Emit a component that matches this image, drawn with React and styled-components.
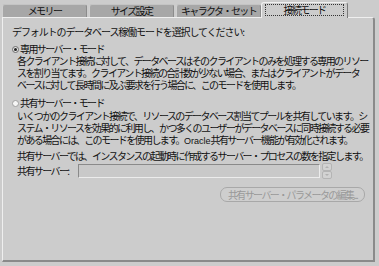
import React from "react";
import styled, { createGlobalStyle } from "styled-components";

const Global = createGlobalStyle`
  html, body { margin: 0; padding: 0; background: #cccccc; }
  body { font-family: "Noto Sans CJK JP", "Noto Sans", sans-serif; color: #111111; }
`;

const Frame = styled.div`
  width: 379px;
  height: 266px;
  box-sizing: border-box;
  padding: 2px 4px 4px 2px;
  display: flex;
  flex-direction: column;
  background: #cccccc;
`;

const TabRow = styled.div`
  display: flex;
  align-items: flex-end;
  gap: 2px;
  height: 15px;
  position: relative;
  z-index: 1;
`;

const Tab = styled.div`
  box-sizing: border-box;
  width: ${p => (p.$active ? 87 : 85)}px;
  height: ${p => (p.$active ? 16 : 13)}px;
  margin-left: ${p => (p.$active ? -2 : 0)}px;
  margin-bottom: ${p => (p.$active ? -1 : 0)}px;
  background: ${p => (p.$active ? "#cccccc" : "#a7a7a7")};
  border-top: 1px solid ${p => (p.$active ? "#f0f0f0" : "#c4c4c4")};
  border-left: 1px solid ${p => (p.$active ? "#f0f0f0" : "#d0d0d0")};
  border-right: 1px solid ${p => (p.$active ? "#7a7a7a" : "#8c8c8c")};
  border-radius: 3px 3px 0 0;
  display: flex;
  align-items: flex-start;
  justify-content: center;
  padding: ${p => (p.$active ? "1px 3px 1px 3px" : "0")};
  font-size: 10px;
  letter-spacing: -1.6px;
  line-height: 11px;
  white-space: nowrap;
`;

const Focus = styled.div`
  flex: 1;
  height: 12px;
  border: 1px dotted #333;
  box-sizing: border-box;
  display: flex;
  justify-content: center;
  line-height: 10px;
`;

const Panel = styled.div`
  flex: 1;
  box-sizing: border-box;
  background: #cccccc;
  border-top: 1px solid #efefef;
  border-left: 1px solid #efefef;
  border-right: 2px solid #8a8a8a;
  border-bottom: 2px solid #8a8a8a;
  border-top-right-radius: 3px;
  padding: 8px 8px 0 9px;
  font-size: 10px;
  letter-spacing: -1.6px;
  line-height: 12px;
`;

const Line = styled.div`
  white-space: nowrap;
  height: 12px;
  padding-left: ${p => p.$indent || 0}px;
  margin-top: ${p => p.$mt || 0}px;
  letter-spacing: ${p => p.$spacing || "inherit"};
`;

const Latin = styled.span`
  letter-spacing: 0;
  font-family: "Liberation Sans", "Noto Sans", sans-serif;
  font-size: 9px;
`;

const RadioRow = styled.div`
  display: flex;
  align-items: center;
  gap: 1px;
  height: 12px;
  margin-top: ${p => p.$mt}px;
  white-space: nowrap;
`;

const RadioCircle = styled.span`
  box-sizing: border-box;
  width: 7px;
  height: 7px;
  border-radius: 50%;
  border: 1px solid ${p => (p.$on ? "#6e6e6e" : "#a0a0a0")};
  background: ${p => (p.$on ? "#e4e4e4" : "#f6f6f6")};
  display: flex;
  align-items: center;
  justify-content: center;
  &::after {
    content: "";
    display: ${p => (p.$on ? "block" : "none")};
    width: 3px;
    height: 3px;
    border-radius: 50%;
    background: #222;
  }
`;

const Desc = styled.div`
  padding-left: 5px;
  margin-top: ${p => p.$mt || 0}px;
`;

const FieldRow = styled.div`
  display: flex;
  align-items: center;
  height: 16px;
  margin-top: 1px;
  padding-left: 5px;
  white-space: nowrap;
`;

const Label = styled.span`
  width: 61px;
`;

const Input = styled.div`
  box-sizing: border-box;
  width: 242px;
  height: 14px;
  background: #c9c9c9;
  border-top: 1px solid #8a8a8a;
  border-left: 1px solid #8a8a8a;
  border-bottom: 1px solid #ececec;
  border-right: 1px solid #ececec;
`;

const Spinner = styled.div`
  display: flex;
  flex-direction: column;
  margin-left: 2px;
`;

const SpinBtn = styled.div`
  box-sizing: border-box;
  width: 10px;
  height: 8px;
  border: 1px solid #b4b4b4;
  border-radius: 2px;
  background: #d2d2d2;
  display: flex;
  align-items: center;
  justify-content: center;
  &::after {
    content: "";
    width: 0;
    height: 0;
    border-left: 2px solid transparent;
    border-right: 2px solid transparent;
    ${p => (p.$up ? "border-bottom: 2px solid #b0b0b0;" : "border-top: 2px solid #b0b0b0;")}
  }
`;

const ButtonRow = styled.div`
  display: flex;
  justify-content: flex-end;
  margin-top: 8px;
`;

const Button = styled.div`
  box-sizing: border-box;
  width: 145px;
  height: 15px;
  border: 1px solid #a8a8a8;
  border-radius: 7px;
  background: #cecece;
  color: #999999;
  display: flex;
  align-items: center;
  justify-content: center;
  line-height: 12px;
  white-space: nowrap;
`;

const tabs = ["メモリー", "サイズ設定", "キャラクタ・セット", "接続モード"];

export default function App() {
  return (
    <>
      <Global />
      <Frame>
        <TabRow>
          {tabs.map((t, i) =>
            i === 3 ? (
              <Tab key={t} $active>
                <Focus>{t}</Focus>
              </Tab>
            ) : (
              <Tab key={t}>{t}</Tab>
            )
          )}
        </TabRow>
        <Panel>
          <Line $spacing="-1.1px">デフォルトのデータベース稼働モードを選択してください:</Line>
          <RadioRow $mt={5}>
            <RadioCircle $on />
            <span>専用サーバー・モード</span>
          </RadioRow>
          <Desc>
            <Line>各クライアント接続に対して、データベースはそのクライアントのみを処理する専用のリソー</Line>
            <Line>スを割り当てます。クライアント接続の合計数が少ない場合、またはクライアントがデータ</Line>
            <Line>ベースに対して長時間に及ぶ要求を行う場合に、このモードを使用します。</Line>
          </Desc>
          <RadioRow $mt={6}>
            <RadioCircle />
            <span>共有サーバー・モード</span>
          </RadioRow>
          <Desc $mt={1}>
            <Line>いくつかのクライアント接続で、リソースのデータベース割当てプールを共有しています。シ</Line>
            <Line>ステム・リソースを効果的に利用し、かつ多くのユーザーがデータベースに同時接続する必要</Line>
            <Line>がある場合には、このモードを使用します。<Latin>Oracle</Latin>共有サーバー機能が有効化されます。</Line>
          </Desc>
          <Line $indent={5} $mt={4}>共有サーバーでは、インスタンスの起動時に作成するサーバー・プロセスの数を指定します。</Line>
          <FieldRow>
            <Label>共有サーバー:</Label>
            <Input />
            <Spinner>
              <SpinBtn $up />
              <SpinBtn />
            </Spinner>
          </FieldRow>
          <ButtonRow>
            <Button>共有サーバー・パラメータの編集...</Button>
          </ButtonRow>
        </Panel>
      </Frame>
    </>
  );
}
